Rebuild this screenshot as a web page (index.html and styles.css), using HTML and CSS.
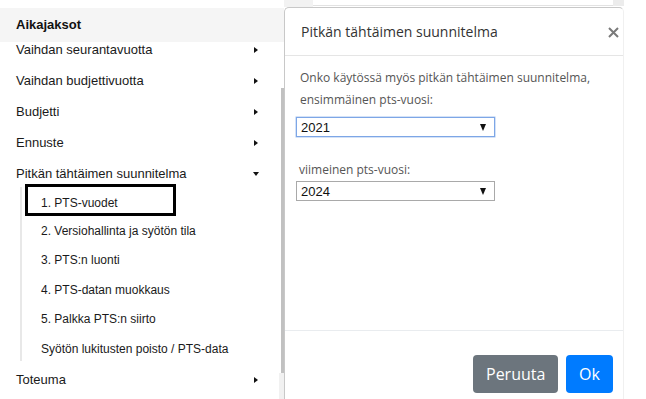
FILE: index.html
```html
<!DOCTYPE html>
<html lang="fi">
<head>
<meta charset="utf-8">
<title>Pitkän tähtäimen suunnitelma</title>
<link rel="stylesheet" href="styles.css">
</head>
<body>
<div class="page">
  <aside class="sidebar">
    <div class="side-top"></div>
    <div class="side-head">Aikajaksot</div>
    <div class="side-body">
      <div class="side-scroll">
        <ul class="menu">
          <li class="item"><span>Vaihdan seurantavuotta</span><i class="tri-right"></i></li>
          <li class="item"><span>Vaihdan budjettivuotta</span><i class="tri-right"></i></li>
          <li class="item"><span>Budjetti</span><i class="tri-right"></i></li>
          <li class="item"><span>Ennuste</span><i class="tri-right"></i></li>
          <li class="item"><span>Pitkän tähtäimen suunnitelma</span><i class="tri-down"></i></li>
          <li class="sub">
            <ul class="sub-list">
              <li class="sub-item active"><span>1. PTS-vuodet</span></li>
              <li class="sub-item"><span>2. Versiohallinta ja syötön tila</span></li>
              <li class="sub-item"><span>3. PTS:n luonti</span></li>
              <li class="sub-item"><span>4. PTS-datan muokkaus</span></li>
              <li class="sub-item"><span>5. Palkka PTS:n siirto</span></li>
              <li class="sub-item"><span>Syötön lukitusten poisto / PTS-data</span></li>
            </ul>
          </li>
          <li class="item"><span>Toteuma</span><i class="tri-right"></i></li>
        </ul>
      </div>
      <div class="scrollbar"><div class="thumb"></div><div class="track-rest"></div></div>
    </div>
  </aside>
  <div class="overlay-col">
    <div class="bg-strip"><div class="cell-a"></div><div class="cell-mid"></div><div class="cell-b"></div></div>
    <section class="modal">
      <header class="modal-header">
        <h1 class="modal-title">Pitkän tähtäimen suunnitelma</h1>
        <svg class="close" width="11" height="11" viewBox="0 0 11 11"><path d="M1 1 L10 10 M10 1 L1 10" stroke="#7a7a7a" stroke-width="2" fill="none"/></svg>
      </header>
      <div class="modal-body">
        <p class="text">Onko käytössä myös pitkän tähtäimen suunnitelma,<br>ensimmäinen pts-vuosi:</p>
        <div class="select focus"><span>2021</span><i class="sel-arrow"></i></div>
        <p class="text label2">viimeinen pts-vuosi:</p>
        <div class="select"><span>2024</span><i class="sel-arrow"></i></div>
      </div>
      <footer class="modal-footer">
        <button class="btn btn-secondary">Peruuta</button>
        <button class="btn btn-primary">Ok</button>
      </footer>
    </section>
  </div>
</div>
</body>
</html>
```

FILE: styles.css
```css
* { box-sizing: border-box; }
html, body { margin: 0; padding: 0; background: #fff; }
body { width: 646px; height: 399px; overflow: hidden; }

.page { display: flex; height: 399px; }

/* Sidebar */
.sidebar { width: 284px; display: flex; flex-direction: column; font-family: "Liberation Sans", Arial, sans-serif; color: #1a1a1a; }
.side-top { height: 8px; }
.side-head { height: 34px; background: #f5f5f5; padding-left: 16px; font-weight: bold; font-size: 13px; line-height: 33px; color: #111; }
.side-body { flex: 1; display: flex; min-height: 0; }
.side-scroll { width: 279px; overflow: hidden; }
.menu { list-style: none; margin: -8px 0 0 0; padding: 0; }
.item { height: 31px; display: flex; align-items: center; justify-content: space-between; padding: 0 21px 0 16px; font-size: 13px; }
.tri-right { width: 0; height: 0; border-top: 3.5px solid transparent; border-bottom: 3.5px solid transparent; border-left: 4px solid #111; }
.tri-down { width: 0; height: 0; border-left: 3.5px solid transparent; border-right: 3.5px solid transparent; border-top: 4px solid #111; margin-right: -1px; }
.sub { padding: 0; }
.sub-list { list-style: none; margin: 0 0 0 20px; padding: 0; border-left: 2px solid #e8e8e8; font-size: 12px; color: #1a1a1a; height: 174px; }
.sub-item { height: 29.5px; line-height: 29.5px; padding-left: 19px; white-space: nowrap; }
.sub-item.active { padding-left: 6px; }
.sub-item.active span { display: block; width: 145px; height: 26px; margin-top: -2px; padding-left: 13px; line-height: 32px; outline: 3px solid #000; }
.menu > .item:last-child { margin-top: 3px; }

.scrollbar { width: 5px; display: flex; flex-direction: column; }
.thumb { margin-top: 46px; height: 285px; background: #c1c1c1; margin-left: 2px; width: 3px; }
.track-rest { flex: 1; background: #f1f1f1; }

/* Overlay / modal */
.overlay-col { width: 340px; display: flex; flex-direction: column; }
.bg-strip { height: 7px; display: flex; }
.cell-a { width: 29px; background: #f2f2f2; }
.cell-mid { flex: 1; border-bottom: 1px solid #e2e2e2; height: 6px; }
.cell-b { width: 11px; background: #ececec; height: 6px; }

.modal { flex: 1; background: #fff; border: 1px solid #c8c8c8; border-bottom: none; border-right-color: #f0f0f0; border-radius: 5px 5px 0 0; font-family: "Open Sans", "Noto Sans", sans-serif; display: flex; flex-direction: column; }
.modal-header { height: 48px; border-bottom: 1px solid #e5e5e5; display: flex; align-items: center; justify-content: space-between; padding: 0 4px 0 16px; }
.modal-title { margin: 0; font-size: 14px; font-weight: normal; color: #333; }
.close { display: block; margin-top: 2px; margin-right: 0; }
.modal-body { height: 274px; padding: 11px 0 0 11px; }
.text { margin: 0; padding-left: 4px; font-size: 12px; line-height: 22px; color: #555; }
.label2 { margin-top: 22px; padding-left: 3px; }
.select { width: 199px; height: 20px; border: 1px solid #a9a9a9; display: flex; align-items: center; justify-content: space-between; padding: 0 8px 0 4px; font-family: "Liberation Sans", Arial, sans-serif; font-size: 13px; color: #111; }
.select.focus { margin-top: 6px; border-color: #7da6e6; box-shadow: 0 0 0 0.5px #a9c4ee; }
.sel-arrow { width: 0; height: 0; border-left: 3.5px solid transparent; border-right: 3.5px solid transparent; border-top: 7px solid #111; }
.modal-footer { flex: 1; border-top: 1px solid #e9ecef; display: flex; justify-content: flex-end; align-items: flex-start; gap: 8px; padding: 24px 10px 0 0; }
.btn { height: 38px; border: none; border-radius: 4px; color: #fff; font-family: "Open Sans", "Noto Sans", sans-serif; font-size: 16px; padding: 0 13px; line-height: 38px; }
.btn-secondary { background: #6c757d; width: 85px; }
.btn-primary { background: #007bff; width: 47px; padding: 0; }
```
